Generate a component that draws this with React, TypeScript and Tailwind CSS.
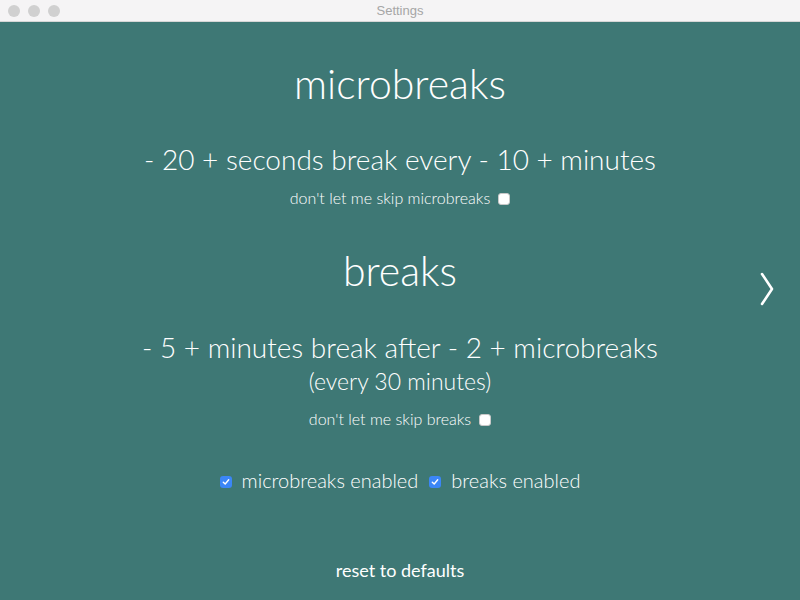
import React from 'react';

function Box({ checked = false, className = '' }: { checked?: boolean; className?: string }) {
  return checked ? (
    <span className={`inline-flex items-center justify-center w-[12px] h-[12px] rounded-[3px] bg-[#3b86f7] ${className}`}>
      <svg width="8" height="8" viewBox="0 0 8 8" fill="none">
        <path d="M1.3 4.2 L3.2 6 L6.7 1.8" stroke="white" strokeWidth="1.4" strokeLinecap="round" strokeLinejoin="round" />
      </svg>
    </span>
  ) : (
    <span className={`inline-block w-[12px] h-[12px] rounded-[3px] bg-white border border-[#c8c8c8] ${className}`} />
  );
}

export default function App() {
  return (
    <div className="w-[800px] h-[600px] flex flex-col bg-[#3e7875] overflow-hidden" style={{ fontFamily: 'Lato, "Open Sans", sans-serif' }}>
      {/* title bar */}
      <div className="relative h-[22px] shrink-0 bg-[#f5f4f5] border-b border-[#d6d6d6] flex items-center justify-center">
        <div className="absolute left-[8px] top-[5px] flex gap-[8px]">
          <span className="w-[12px] h-[12px] rounded-full bg-[#d0d0d0]" />
          <span className="w-[12px] h-[12px] rounded-full bg-[#d0d0d0]" />
          <span className="w-[12px] h-[12px] rounded-full bg-[#d0d0d0]" />
        </div>
        <span className="text-[13px] text-[#a6a6a6]" style={{ fontFamily: '"Liberation Sans", sans-serif' }}>Settings</span>
      </div>

      {/* content */}
      <div className="relative flex-1 flex flex-col items-center text-white font-light">
        <h1 className="mt-[38px] text-[41px] leading-[48px]">microbreaks</h1>
        <p className="mt-[35px] text-[28px] leading-[32px]">- 20 + seconds break every - 10 + minutes</p>
        <label className="mt-[13px] text-[16px] leading-[20px] flex items-center gap-[8px]">
          don't let me skip microbreaks <Box className="mt-[2px]" />
        </label>

        <h1 className="mt-[39px] text-[41px] leading-[48px]">breaks</h1>
        <p className="mt-[36px] text-[28px] leading-[32px]">- 5 + minutes break after - 2 + microbreaks</p>
        <p className="mt-[4px] text-[23px] leading-[28px]">(every 30 minutes)</p>
        <label className="mt-[14px] text-[16px] leading-[20px] flex items-center gap-[8px]">
          don't let me skip breaks <Box className="mt-[2px]" />
        </label>

        <div className="mt-[38px] text-[20px] leading-[26px] flex items-center">
          <Box checked className="mt-[4px]" />
          <span className="ml-[10px]">microbreaks enabled</span>
          <Box checked className="mt-[4px] ml-[11px]" />
          <span className="ml-[10px]">breaks enabled</span>
        </div>

        <button className="mt-[66px] text-[18px] leading-[22px] font-normal">reset to defaults</button>

        <div className="absolute right-[25px] top-[250px]">
          <svg width="16" height="34" viewBox="0 0 16 34" fill="none">
            <path d="M3 2 L13 17 L3 32" stroke="white" strokeWidth="2.6" strokeLinecap="round" strokeLinejoin="round" />
          </svg>
        </div>
      </div>
    </div>
  );
}
